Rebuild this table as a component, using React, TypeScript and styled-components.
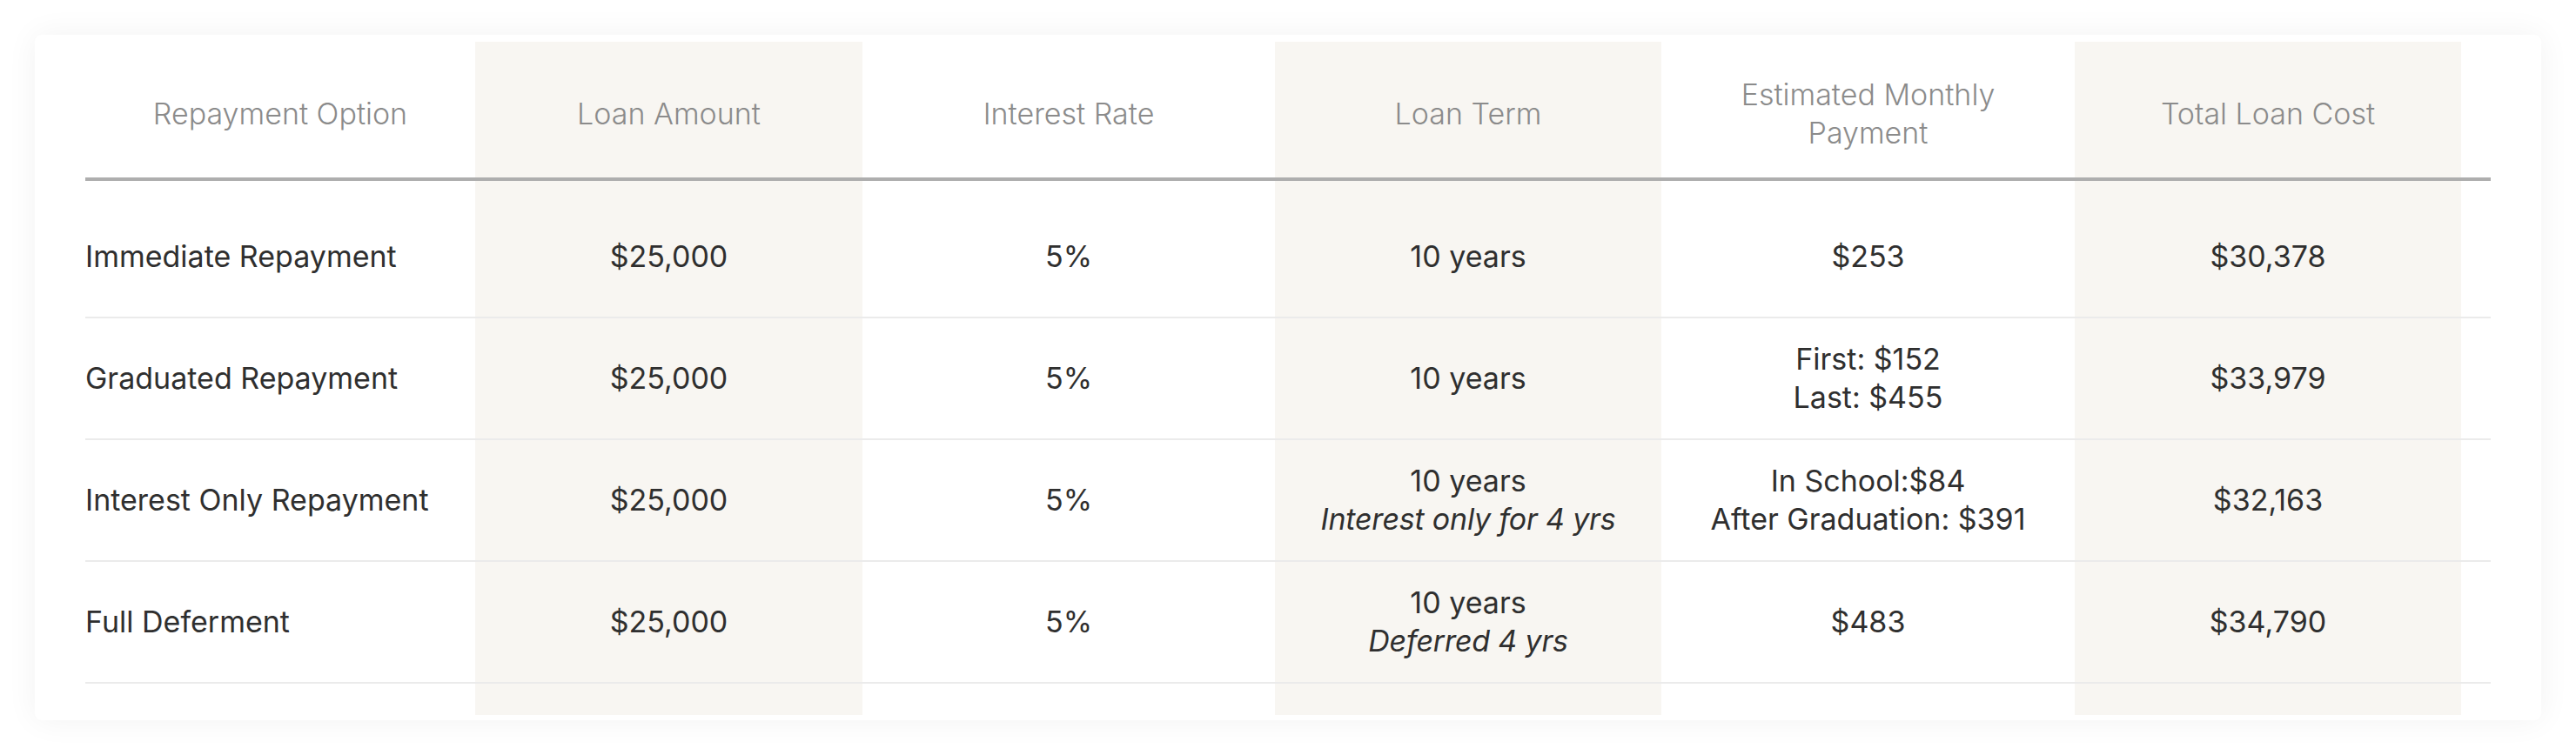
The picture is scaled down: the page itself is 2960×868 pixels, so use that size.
import styled, { createGlobalStyle } from 'styled-components'

const GlobalStyle = createGlobalStyle`
  html, body {
    margin: 0;
    padding: 0;
    background: #ffffff;
  }
  body {
    font-family: Inter, 'Noto Sans', 'Liberation Sans', sans-serif;
  }
`

const COLS = '448px 445px 474px 444px 475px 444px 1fr'

const Page = styled.div`
  padding: 40px;
  box-sizing: border-box;
  width: 2960px;
  height: 868px;
`

const Card = styled.div`
  background: #ffffff;
  border-radius: 8px;
  box-shadow: 0 0 36px rgba(0, 0, 0, 0.055);
  padding: 8px 58px 6px;
  height: 788px;
  box-sizing: border-box;
`

const Row = styled.div<{ $line?: 'thick' | 'thin' | 'none' }>`
  display: grid;
  grid-template-columns: ${COLS};
  border-bottom: ${(p) =>
    p.$line === 'thick' ? '4px solid #aeaeae' : p.$line === 'thin' ? '2px solid #ebebeb' : 'none'};
`

const Cell = styled.div<{ $shaded?: boolean; $left?: boolean }>`
  display: flex;
  flex-direction: column;
  justify-content: center;
  align-items: ${(p) => (p.$left ? 'flex-start' : 'center')};
  text-align: ${(p) => (p.$left ? 'left' : 'center')};
  background: ${(p) => (p.$shaded ? '#f8f6f2' : 'transparent')};
  font-size: 34px;
  line-height: 44px;
  color: #2f2f2f;
`

const HeadCell = styled(Cell)`
  height: 156px;
  padding-top: 10px;
  box-sizing: border-box;
  font-weight: 300;
  color: #8b8b8b;
`

const BodyCell = styled(Cell)`
  height: 138px;
`

const Spacer = styled(Cell)<{ $h: number }>`
  height: ${(p) => p.$h}px;
`

const Note = styled.span`
  font-style: italic;
  letter-spacing: -0.2px;
`

const shaded = [false, true, false, true, false, true, false]

const headers = [
  'Repayment Option',
  'Loan Amount',
  'Interest Rate',
  'Loan Term',
  <>Estimated Monthly<br />Payment</>,
  'Total Loan Cost',
]

type RowData = {
  option: string
  amount: string
  rate: string
  term: string
  termNote?: string
  payment: string[]
  total: string
}

const rows: RowData[] = [
  { option: 'Immediate Repayment', amount: '$25,000', rate: '5%', term: '10 years', payment: ['$253'], total: '$30,378' },
  { option: 'Graduated Repayment', amount: '$25,000', rate: '5%', term: '10 years', payment: ['First: $152', 'Last: $455'], total: '$33,979' },
  {
    option: 'Interest Only Repayment',
    amount: '$25,000',
    rate: '5%',
    term: '10 years',
    termNote: 'Interest only for 4 yrs',
    payment: ['In School:$84', 'After Graduation: $391'],
    total: '$32,163',
  },
  {
    option: 'Full Deferment',
    amount: '$25,000',
    rate: '5%',
    term: '10 years',
    termNote: 'Deferred 4 yrs',
    payment: ['$483'],
    total: '$34,790',
  },
]

const SpacerRow = ({ h }: { h: number }) => (
  <Row $line="none">
    {shaded.map((s, i) => (
      <Spacer key={i} $shaded={s} $h={h} />
    ))}
  </Row>
)

export default function App() {
  return (
    <>
      <GlobalStyle />
      <Page>
        <Card>
          <Row $line="thick">
            {headers.map((h, i) => (
              <HeadCell key={i} $shaded={shaded[i]}>
                <span>{h}</span>
              </HeadCell>
            ))}
            <HeadCell />
          </Row>
          <SpacerRow h={18} />
          {rows.map((r) => (
            <Row key={r.option} $line="thin">
              <BodyCell $left>{r.option}</BodyCell>
              <BodyCell $shaded>{r.amount}</BodyCell>
              <BodyCell>{r.rate}</BodyCell>
              <BodyCell $shaded>
                <span>{r.term}</span>
                {r.termNote && <Note>{r.termNote}</Note>}
              </BodyCell>
              <BodyCell>
                {r.payment.map((p) => (
                  <span key={p}>{p}</span>
                ))}
              </BodyCell>
              <BodyCell $shaded>{r.total}</BodyCell>
              <BodyCell />
            </Row>
          ))}
          <SpacerRow h={36} />
        </Card>
      </Page>
    </>
  )
}
